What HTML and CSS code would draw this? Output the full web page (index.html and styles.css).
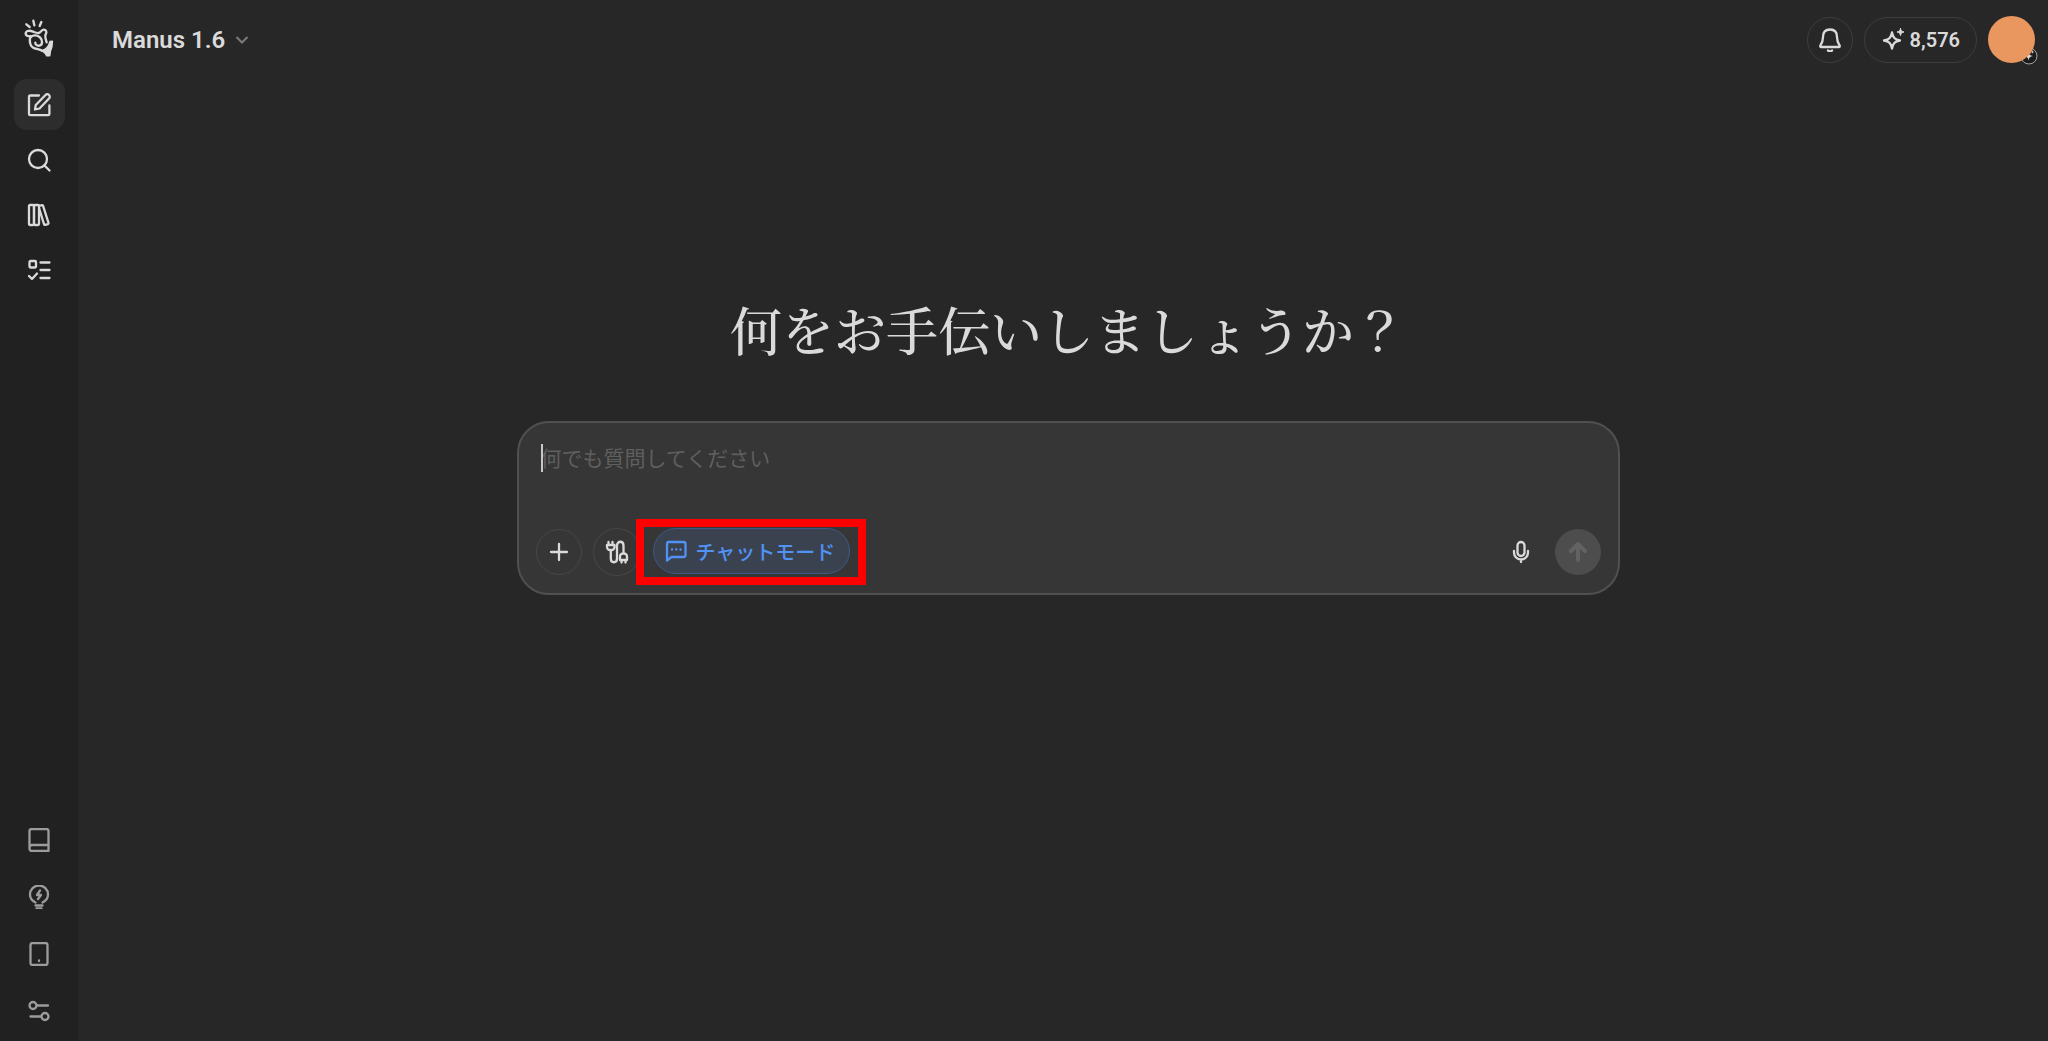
FILE: index.html
```html
<!DOCTYPE html>
<html lang="ja">
<head>
  <meta charset="UTF-8">
  <meta name="viewport" content="width=device-width, initial-scale=1">
  <title>Manus</title>
  <link rel="stylesheet" href="styles.css">
</head>
<body>
  <aside class="sidebar">
    <a class="logo" href="#" aria-label="Manus">
      <svg width="30" height="38" viewBox="70 58 90 114" fill="none" stroke="currentColor" stroke-width="7" stroke-linecap="round" stroke-linejoin="round">
        <path d="M77 74l10 8M98 63l3 14M122 67l-5 12"/>
        <path d="M90 110c-9 1-15-3-15-8 0-8 10-11 20-7 8 3 13 6 19 5 6-1 9-10 15-10 8 0 10 7 6 14-3 5 0 15 3 24"/>
        <path d="M90 110c-5 11-3 26 6 33 8 6 20 5 28 10"/>
        <path d="M90 112c8-7 21-6 28 1 9 9 8 23-2 25-7 1-13-4-12-9"/>
        <path d="M124 153c11-3 20-10 24-27l7-1c0 11-1 20-6 29l-2 14h-9c-3-7-8-11-14-15z" fill="currentColor" stroke-width="5"/>
      </svg>
    </a>
    <nav class="nav">
      <button class="nav-btn active" aria-label="新規タスク">
        <svg class="icon" viewBox="0 0 24 24"><path d="M12 2.500H3.200c-.8 0-1.200.5-1.200 1.200V21c0 .8.500 1.200 1.200 1.200h18c.8 0 1.200-.5 1.200-1.200V12.500"/><path d="M8 16.500l.8-4.500L18.500 2c1-1 2.500-1 3.500 0s1 2.500 0 3.500L12.500 15.500z"/></svg>
      </button>
      <button class="nav-btn" aria-label="検索">
        <svg class="icon" viewBox="0 0 24 24"><circle cx="11" cy="11" r="9"/><path d="M17.500 17.500l5 5"/></svg>
      </button>
      <button class="nav-btn" aria-label="ライブラリ">
        <svg class="icon" viewBox="0 0 24 24"><rect x="2" y="2" width="5" height="20" rx="1"/><rect x="7" y="2" width="5" height="20" rx="1"/><path d="M12 3l3-.9c.5-.1.900.1 1 .6l5.500 17.200c.2.600-.1 1-.600 1.200l-2.700.8c-.5.100-.9-.1-1.100-.6L12 5"/></svg>
      </button>
      <button class="nav-btn" aria-label="タスク">
        <svg class="icon" viewBox="0 0 24 24"><rect x="2.500" y="3" width="6.500" height="6.500" rx="1"/><path d="M13.500 4.500h9M13.500 12h9M13.500 20h9M2 18l3 3 5-5.500"/></svg>
      </button>
    </nav>
    <nav class="nav nav-bottom">
      <button class="nav-btn" aria-label="ナレッジ">
        <svg class="icon" viewBox="0 0 24 24"><path d="M4.500 1h15c1.200 0 2 .7 2 1.800v20.200H5c-1.500 0-2.500-1-2.500-2.500V3c0-1.200.8-2 2-2zM2.500 20c0-2 1-3 2.500-3h16.500"/></svg>
      </button>
      <button class="nav-btn" aria-label="ヒント">
        <svg class="icon" viewBox="0 0 24 24"><path d="M8.500 17.500C4.500 15.500 3 13 3 9.500a9 9 0 0 1 18 0c0 3.500-1.500 6-5.500 8M8.500 20.500h7M9.500 23.500h5M13 5.500l-3 4.500h4l-3 4"/></svg>
      </button>
      <button class="nav-btn" aria-label="モバイル">
        <svg class="icon" viewBox="0 0 24 24"><rect x="3.500" y="1" width="17" height="22" rx="2"/><path d="M12 18.500v.5"/></svg>
      </button>
      <button class="nav-btn" aria-label="設定">
        <svg class="icon" viewBox="0 0 24 24"><circle cx="6" cy="6.500" r="3.500"/><circle cx="18" cy="17.500" r="3.500"/><path d="M10 6.500h11M3.500 17.500H14"/></svg>
      </button>
    </nav>
  </aside>

  <div class="page">
    <header class="topbar">
      <button class="model">
        Manus 1.6
        <svg width="14" height="10" viewBox="0 0 14 10"><path d="M1.500 2L7 7.500 12.500 2"/></svg>
      </button>
      <div class="account">
        <button class="round" aria-label="通知">
          <svg class="icon" viewBox="0 0 24 24"><path d="M12 1.500c-4.500 0-7 3-7 7.500 0 3.500-.5 5.500-2.600 8.500-.4.700-.1 1.500.7 1.500h17.800c.8 0 1.100-.8.7-1.500C19.500 14.500 19 12.500 19 9c0-4.500-2.500-7.500-7-7.500zM10 22.500c1 1.200 3 1.200 4 0"/></svg>
        </button>
        <button class="credits">
          <svg class="icon" viewBox="0 0 24 24"><path d="M11 4.500c1 5 2.500 7 8 8-5.500 1-7 3-8 8-1-5-2.500-7-8-8 5.500-1 7-3 8-8z"/><path class="solid" d="M19.500.5c.5 2.500 1 3 3.500 3.500-2.500.5-3 1-3.500 3.500C19 5 18.500 4.500 16 4c2.500-.5 3-1 3.500-3.500z"/></svg>
          8,576
        </button>
        <button class="avatar" aria-label="アカウント">
          <svg class="avatar-badge" viewBox="0 0 18 18"><circle cx="9" cy="9" r="8"/><path d="M8.500 4.500c.5 3.500 1.500 4 4.500 4.500-3 .5-4 1.500-4.500 4.500C8 10.500 7 9.500 4 9c3-.5 4-1 4.500-4.500zM12.500 3c.2 1.500.5 1.800 2 2-1.500.2-1.800.5-2 2-.2-1.500-.5-1.800-2-2 1.500-.2 1.800-.5 2-2z"/></svg>
          <span class="avatar-face"></span>
        </button>
      </div>
    </header>

    <main class="home">
      <h1>何をお手伝いしましょうか？</h1>
      <form class="composer">
        <div class="prompt">
          <span class="caret"></span>
          <textarea rows="1" aria-label="メッセージ" placeholder="何でも質問してください"></textarea>
        </div>
        <div class="tools">
          <button type="button" class="round" aria-label="追加">
            <svg class="icon" viewBox="0 0 24 24"><path d="M12 4v16M4 12h16"/></svg>
          </button>
          <button type="button" class="round connect" aria-label="コネクタ">
            <svg class="icon" viewBox="0 0 24 24"><path d="M3.500 2v3M7.500 2v3M2 5h7.500v2a3 3 0 0 1-3 3H5a3 3 0 0 1-3-3zM5.800 10v8.500c0 5 6.200 5 6.200 0v-13c0-5 6.500-5 6.500 0V13M15 20v-3.500a3 3 0 0 1 3-3h1a3 3 0 0 1 3 3V20zM16.500 20v2.500M20.500 20v2.500"/></svg>
          </button>
          <div class="highlight">
            <button type="button" class="chat-mode">
              <svg class="icon" viewBox="0 0 24 24"><path d="M4.500 3h15c1.300 0 2 .7 2 2v11c0 1.300-.7 2-2 2H7.500L3 21.500V5c0-1.300.500-2 1.500-2zM8 10.500h.1M12.200 10.500h.1M16.500 10.500h.1"/></svg>
              チャットモード
            </button>
          </div>
          <button type="button" class="mic" aria-label="音声入力">
            <svg class="icon" viewBox="0 0 24 24"><rect x="8.500" y="2" width="7" height="14" rx="3.500"/><path d="M5 11v1.500a7 7 0 0 0 14 0V11M12 19.500V22"/></svg>
          </button>
          <button type="button" class="send" aria-label="送信" disabled>
            <svg class="icon" viewBox="0 0 24 24"><path d="M12 20V4.500M5 11l7-7 7 7"/></svg>
          </button>
        </div>
      </form>
    </main>
  </div>
</body>
</html>
```
FILE: styles.css
```css
* {
  box-sizing: border-box;
}
body {
  margin: 0;
  min-height: 100vh;
  display: flex;
  background: #272727;
  color: #dadada;
  font-family: Roboto, "Noto Sans CJK JP", sans-serif;
}
button {
  display: flex;
  align-items: center;
  justify-content: center;
  padding: 0;
  border: none;
  background: none;
  color: inherit;
  font: inherit;
  cursor: pointer;
}
svg {
  flex-shrink: 0;
}
.icon {
  width: 24px;
  height: 24px;
  fill: none;
  stroke: currentColor;
  stroke-width: 2.3;
  stroke-linecap: round;
  stroke-linejoin: round;
}
.icon .solid {
  fill: currentColor;
  stroke-width: 1;
}

/* sidebar */
.sidebar {
  width: 78px;
  flex-shrink: 0;
  display: flex;
  flex-direction: column;
  align-items: center;
  padding: 19px 0 5px;
  background: #212121;
}
.logo {
  height: 38px;
  margin-bottom: 22px;
  color: #dadada;
}
.nav {
  display: flex;
  flex-direction: column;
  gap: 4px;
}
.nav-bottom {
  margin-top: auto;
  gap: 6px;
  color: #9c9c9c;
}
.nav-btn {
  width: 51px;
  height: 51px;
  border-radius: 13px;
}
.nav-btn.active {
  background: #2d2d2d;
}

/* top bar */
.page {
  flex: 1;
  display: flex;
  flex-direction: column;
}
.topbar {
  display: flex;
  align-items: center;
  justify-content: space-between;
  padding: 16px 13px 0 34px;
}
.model {
  gap: 10px;
  font-size: 24px;
  font-weight: 600;
  line-height: 46px;
}
.model svg {
  fill: none;
  stroke: #7c7c7c;
  stroke-width: 2;
}
.account {
  display: flex;
  align-items: center;
  gap: 11px;
}
.round {
  width: 46px;
  height: 46px;
  border: 1px solid #3d3d3d;
  border-radius: 50%;
}
.credits {
  height: 46px;
  gap: 5px;
  padding: 0 16px;
  border: 1px solid #3d3d3d;
  border-radius: 23px;
  font-size: 20px;
  font-weight: 600;
}
.avatar {
  position: relative;
  width: 47px;
  height: 47px;
}
.avatar-face {
  position: relative;
  width: 47px;
  height: 47px;
  border-radius: 50%;
  background: #e9965f;
}
.avatar-badge {
  position: absolute;
  right: -3px;
  bottom: -2px;
  width: 18px;
  height: 18px;
  fill: #e0e0e0;
}
.avatar-badge circle {
  fill: #1c1c1c;
  stroke: #a5a5a5;
}

/* prompt area */
.home {
  width: 100%;
  max-width: 1113px;
  margin: 0 auto;
  padding: 226px 0 0 10px;
}
h1 {
  margin: 0 0 52px;
  font-family: "Noto Serif CJK JP", "Noto Serif JP", "Noto Sans CJK JP", serif;
  font-size: 52px;
  font-weight: 500;
  line-height: 80px;
  text-align: center;
}
.composer {
  padding: 21px 17px 10px;
  border: 2px solid #505050;
  border-radius: 32px;
  background: #363637;
}
.prompt {
  position: relative;
  display: flex;
  padding: 0 5px;
}
.caret {
  position: absolute;
  width: 2px;
  height: 28px;
  background: #c8c8c8;
}
textarea {
  width: 100%;
  height: 75px;
  padding: 0;
  border: none;
  outline: none;
  resize: none;
  background: none;
  color: #dadada;
  font-family: "Noto Sans CJK JP", sans-serif;
  font-size: 21px;
  line-height: 26px;
}
textarea::placeholder {
  color: #5f5f5f;
}
.tools {
  display: flex;
  align-items: center;
  height: 66px;
  margin-bottom: -2px;
}
.tools .round {
  border-color: #474747;
}
.tools .connect {
  width: 48px;
  height: 48px;
  margin-left: 11px;
}
.highlight {
  position: relative;
  margin-left: -5px;
  padding: 1px 8px 3px 9px;
  border: 8px solid #ff0000;
}
.chat-mode {
  height: 46px;
  gap: 8px;
  padding: 0 14px 0 10px;
  border: 1px solid #405888;
  border-radius: 23px;
  background: #3a4250;
  color: #5192f5;
  font-family: "Noto Sans CJK JP", sans-serif;
  font-size: 20px;
  font-weight: 500;
}
.mic {
  width: 46px;
  height: 46px;
  margin-left: auto;
}
.send {
  width: 46px;
  height: 46px;
  margin-left: 11px;
  border-radius: 50%;
  background: #4d4d4d;
  color: #626262;
}
.send .icon {
  stroke-width: 4;
}
```
